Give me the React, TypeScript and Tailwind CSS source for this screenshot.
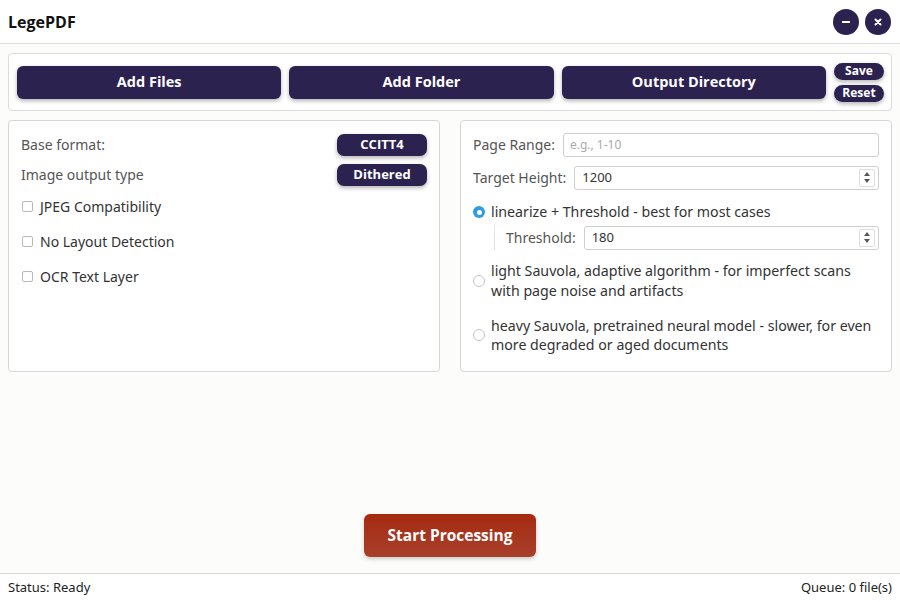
import React from "react";

const body = { fontFamily: '"Noto Sans", "Open Sans", sans-serif' };
const bold = { fontFamily: '"Open Sans", "Noto Sans", sans-serif' };

function DarkButton({ label, className }: { label: string; className: string }) {
  return (
    <button
      style={bold}
      className={`bg-[#2c2250] text-white font-bold shadow-[0_2px_4px_rgba(0,0,0,0.3)] ${className}`}
    >
      {label}
    </button>
  );
}

function Checkbox({ label }: { label: string }) {
  return (
    <div className="flex items-center gap-[7px] h-[35px]">
      <span className="w-[11px] h-[11px] border border-[#b8b8b8] rounded-[2px] bg-white" />
      <span className="text-[14px] text-[#333]">{label}</span>
    </div>
  );
}

function Spin({ value }: { value: string }) {
  return (
    <div className="flex-1 h-[24px] border border-[#cfcfcf] rounded-[3px] bg-white flex items-center justify-between pl-[7px] pr-[3px]">
      <span className="text-[13px] text-[#333]">{value}</span>
      <span className="w-[16px] h-[18px] border border-[#dedede] rounded-[2px] flex flex-col items-center justify-center gap-[3px]">
        <svg width="6" height="4" viewBox="0 0 6 4">
          <path d="M0 4 L3 0 L6 4 Z" fill="#555" />
        </svg>
        <svg width="6" height="4" viewBox="0 0 6 4">
          <path d="M0 0 L3 4 L6 0 Z" fill="#555" />
        </svg>
      </span>
    </div>
  );
}

function Radio({ checked }: { checked?: boolean }) {
  return checked ? (
    <span className="w-[12px] h-[12px] rounded-full bg-[#2f9ce0] flex items-center justify-center shrink-0">
      <span className="w-[5px] h-[5px] rounded-full bg-white" />
    </span>
  ) : (
    <span className="w-[12px] h-[12px] rounded-full border border-[#c4c4c4] bg-white shrink-0" />
  );
}

export default function App() {
  return (
    <div style={body} className="w-[900px] h-[602px] bg-[#fcfcfb] flex flex-col text-[#333]">
      {/* title bar */}
      <div className="h-[44px] bg-white border-b border-[#dcdcdc] flex items-center justify-between pl-[8px] pr-[9px] shrink-0">
        <span style={bold} className="text-[16px] font-bold text-[#111]">LegePDF</span>
        <div className="flex gap-[6px]">
          <span className="w-[26px] h-[26px] rounded-full bg-[#2c2250] flex items-center justify-center">
            <span className="w-[8px] h-[2px] bg-white" />
          </span>
          <span className="w-[26px] h-[26px] rounded-full bg-[#2c2250] flex items-center justify-center">
            <svg width="8" height="8" viewBox="0 0 8 8">
              <path d="M1.5 1.5 L6.5 6.5 M6.5 1.5 L1.5 6.5" stroke="white" strokeWidth="2" strokeLinecap="round" />
            </svg>
          </span>
        </div>
      </div>

      {/* toolbar */}
      <div className="mx-[8px] mt-[9px] h-[58px] bg-white border border-[#dcdcdc] rounded-[4px] flex items-center pl-[8px] pr-[7px] gap-[8px] shrink-0">
        <DarkButton label="Add Files" className="flex-1 h-[33px] rounded-[6px] text-[14.5px]" />
        <DarkButton label="Add Folder" className="flex-1 h-[33px] rounded-[6px] text-[14.5px]" />
        <DarkButton label="Output Directory" className="flex-1 h-[33px] rounded-[6px] text-[14.5px]" />
        <div className="flex flex-col gap-[5px] w-[50px]">
          <DarkButton label="Save" className="h-[17px] rounded-full text-[12px] leading-none" />
          <DarkButton label="Reset" className="h-[17px] rounded-full text-[12px] leading-none" />
        </div>
      </div>

      {/* panels */}
      <div className="mx-[8px] mt-[9px] flex gap-[20px] h-[252px] shrink-0">
        <div className="flex-1 bg-white border border-[#d6d6d6] rounded-[4px] pl-[12px] pr-[12px] pt-[12px]">
          <div className="flex items-center justify-between h-[23px]">
            <span className="text-[14px] text-[#555]">Base format:</span>
            <DarkButton label="CCITT4" className="w-[90px] h-[22px] rounded-[7px] text-[13px]" />
          </div>
          <div className="flex items-center justify-between h-[23px] mt-[7px]">
            <span className="text-[14px] text-[#555]">Image output type</span>
            <DarkButton label="Dithered" className="w-[90px] h-[22px] rounded-[7px] text-[13px]" />
          </div>
          <div className="mt-[3px] pl-[1px]">
            <Checkbox label="JPEG Compatibility" />
            <Checkbox label="No Layout Detection" />
            <Checkbox label="OCR Text Layer" />
          </div>
        </div>

        <div className="flex-1 bg-white border border-[#d6d6d6] rounded-[4px] pl-[12px] pr-[12px] pt-[11px]">
          <div className="flex items-center gap-[8px] h-[25px]">
            <span className="text-[14px] text-[#555]">Page Range:</span>
            <div className="flex-1 h-[24px] border border-[#cfcfcf] rounded-[3px] flex items-center pl-[6px]">
              <span className="text-[12px] text-[#aaa]">e.g., 1-10</span>
            </div>
          </div>
          <div className="flex items-center gap-[8px] h-[25px] mt-[8px]">
            <span className="text-[14px] text-[#555]">Target Height:</span>
            <Spin value="1200" />
          </div>
          <div className="flex items-center gap-[6px] mt-[12px] h-[20px]">
            <Radio checked />
            <span className="text-[14.2px] text-[#333]">linearize + Threshold - best for most cases</span>
          </div>
          <div className="flex items-center ml-[21px] mt-[3px] h-[25px] border-l border-[#e2e2e2] pl-[11px] gap-[8px]">
            <span className="text-[14px] text-[#555]">Threshold:</span>
            <Spin value="180" />
          </div>
          <div className="flex items-center gap-[6px] mt-[11px]">
            <Radio />
            <span className="text-[14.2px] leading-[20px] text-[#333]">
              light Sauvola, adaptive algorithm - for imperfect scans
              <br />
              with page noise and artifacts
            </span>
          </div>
          <div className="flex items-center gap-[6px] mt-[15px]">
            <Radio />
            <span className="text-[14.2px] leading-[19px] text-[#333]">
              heavy Sauvola, pretrained neural model - slower, for even
              <br />
              more degraded or aged documents
            </span>
          </div>
        </div>
      </div>

      {/* start */}
      <div className="flex-1 flex items-end justify-center pb-[16px]">
        <button
          style={bold}
          className="w-[172px] h-[43px] rounded-[6px] bg-gradient-to-b from-[#a5290f] to-[#a8402a] text-white font-bold text-[15.5px] shadow-[0_2px_4px_rgba(0,0,0,0.2)]"
        >
          Start Processing
        </button>
      </div>

      {/* status */}
      <div className="h-[29px] border-t border-[#d6d6d6] bg-white flex items-center justify-between px-[8px] shrink-0">
        <span className="text-[13px] text-[#222]">Status: Ready</span>
        <span className="text-[13px] text-[#222]">Queue: 0 file(s)</span>
      </div>
    </div>
  );
}
